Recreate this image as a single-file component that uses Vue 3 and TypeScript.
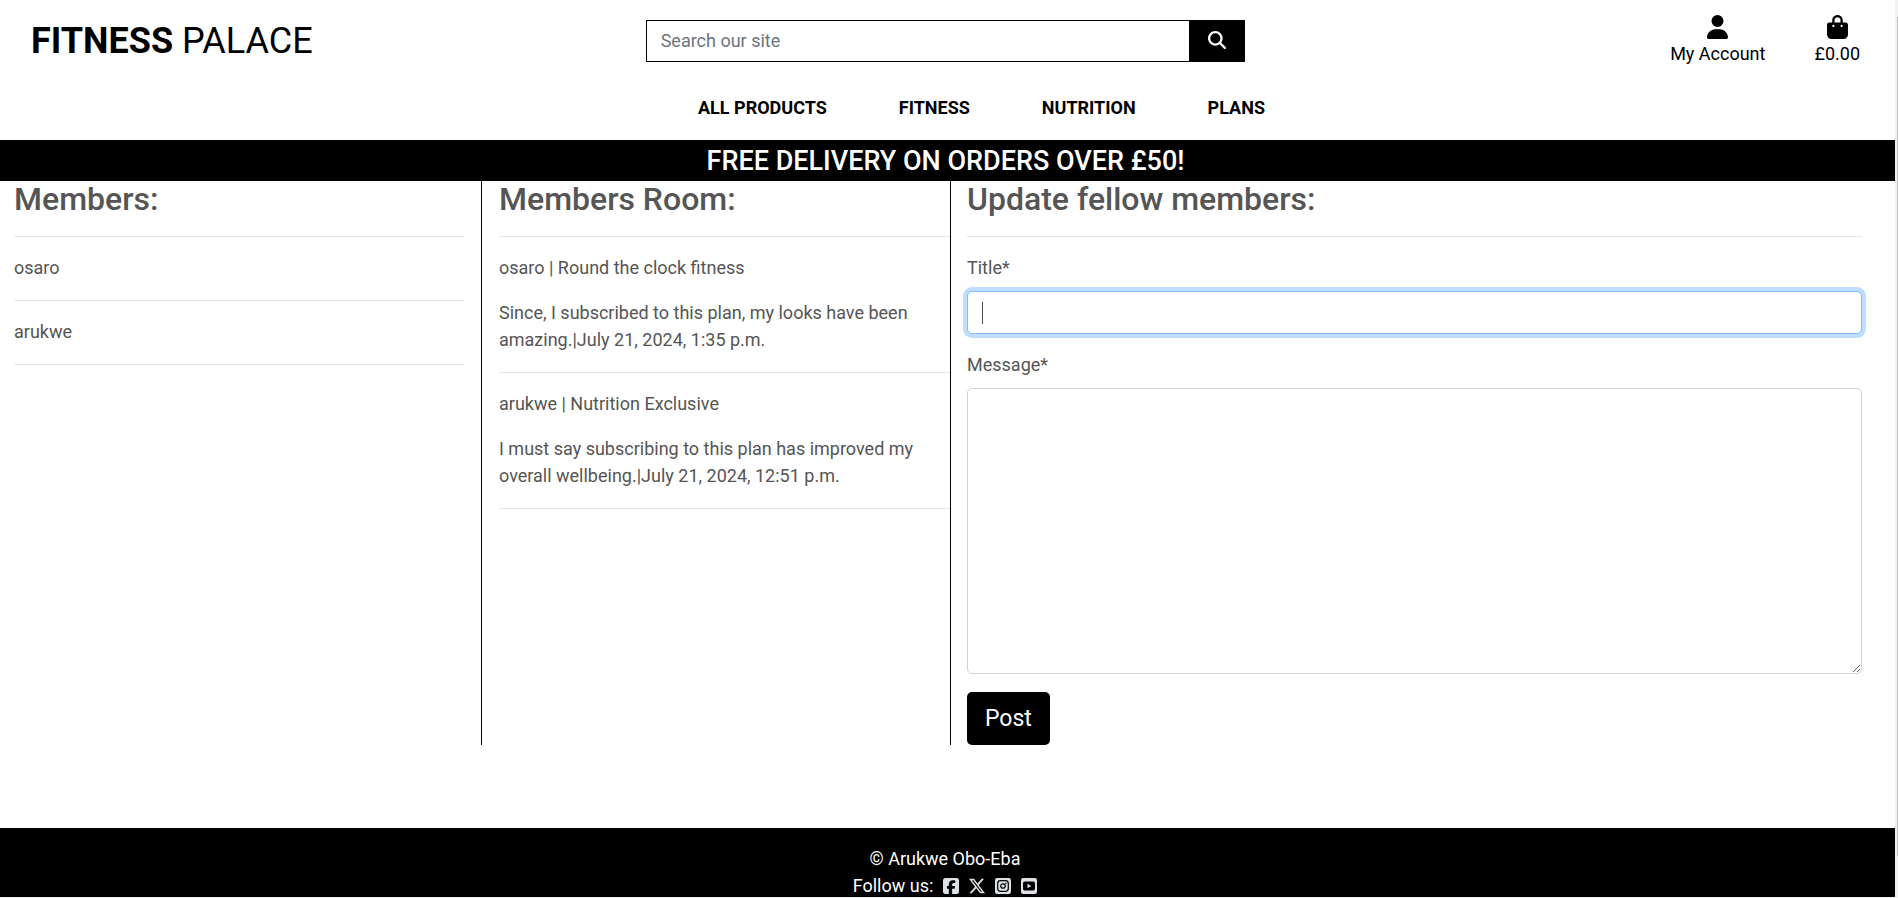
<script setup lang="ts">
import { ref } from 'vue'

interface Post {
  author: string
  title: string
  body: string
  date: string
}

const links: string[] = ['All Products', 'Fitness', 'Nutrition', 'Plans']
const members: string[] = ['osaro', 'arukwe']
const posts: Post[] = [
  {
    author: 'osaro',
    title: 'Round the clock fitness',
    body: 'Since, I subscribed to this plan, my looks have been amazing.',
    date: 'July 21, 2024, 1:35 p.m.',
  },
  {
    author: 'arukwe',
    title: 'Nutrition Exclusive',
    body: 'I must say subscribing to this plan has improved my overall wellbeing.',
    date: 'July 21, 2024, 12:51 p.m.',
  },
]

const query = ref('')
const title = ref('')
const message = ref('')
</script>

<template>
  <div class="shell">
    <div class="page">
      <header class="top">
        <div class="bar">
          <a class="logo" href="#"><strong>FITNESS</strong> PALACE</a>
          <form class="search" @submit.prevent>
            <input v-model="query" type="text" placeholder="Search our site" aria-label="Search our site" />
            <button type="submit" aria-label="Search">
              <svg class="icon-search" viewBox="0 0 512 512" aria-hidden="true">
                <path d="M416 208c0 45.9-14.9 88.3-40 122.7L502.6 457.4c12.5 12.5 12.5 32.8 0 45.3s-32.8 12.5-45.3 0L330.7 376c-34.4 25.2-76.8 40-122.7 40C93.1 416 0 322.9 0 208S93.1 0 208 0S416 93.1 416 208zM208 352a144 144 0 1 0 0-288 144 144 0 1 0 0 288z" />
              </svg>
            </button>
          </form>
          <div class="account">
            <a href="#">
              <svg viewBox="0 0 448 512" aria-hidden="true">
                <path d="M224 256A128 128 0 1 0 224 0a128 128 0 1 0 0 256zm-45.7 48C79.8 304 0 383.8 0 482.3C0 498.7 13.3 512 29.7 512H418.3c16.4 0 29.7-13.3 29.7-29.7C448 383.8 368.2 304 269.7 304H178.3z" />
              </svg>
              <span>My Account</span>
            </a>
            <a href="#">
              <svg viewBox="0 0 448 512" aria-hidden="true">
                <path d="M160 112c0-35.3 28.7-64 64-64s64 28.7 64 64v48H160V112zm-48 48H48c-26.5 0-48 21.5-48 48V416c0 53 43 96 96 96H352c53 0 96-43 96-96V208c0-26.5-21.5-48-48-48H336V112C336 50.1 285.9 0 224 0S112 50.1 112 112v48zm24 48a24 24 0 1 1 0 48 24 24 0 1 1 0-48zm152 24a24 24 0 1 1 48 0 24 24 0 1 1 -48 0z" />
              </svg>
              <span>£0.00</span>
            </a>
          </div>
        </div>
        <nav class="nav">
          <a v-for="link in links" :key="link" href="#">{{ link }}</a>
        </nav>
      </header>

      <h4 class="banner">FREE DELIVERY ON ORDERS OVER £50!</h4>

      <main class="columns">
        <section class="col members">
          <h3>Members:</h3>
          <hr />
          <template v-for="member in members" :key="member">
            <p>{{ member }}</p>
            <hr />
          </template>
        </section>

        <section class="col room">
          <h3>Members Room:</h3>
          <hr />
          <article v-for="post in posts" :key="post.title">
            <p>{{ post.author }} | {{ post.title }}</p>
            <p>{{ post.body }}|{{ post.date }}</p>
            <hr />
          </article>
        </section>

        <section class="col update">
          <h3>Update fellow members:</h3>
          <hr />
          <form @submit.prevent>
            <label for="title">Title*</label>
            <div class="field">
              <input id="title" v-model="title" type="text" />
              <span class="caret" aria-hidden="true"></span>
            </div>
            <label for="message">Message*</label>
            <textarea id="message" v-model="message"></textarea>
            <button class="post" type="submit">Post</button>
          </form>
        </section>
      </main>

      <footer class="foot">
        <div>© Arukwe Obo-Eba</div>
        <div class="follow">
          <span>Follow us:</span>
          <a href="#" aria-label="Facebook">
            <svg viewBox="0 32 448 448" aria-hidden="true">
              <path d="M64 32C28.7 32 0 60.7 0 96V416c0 35.3 28.7 64 64 64h98.2V334.2H109.4V256h52.8V222.3c0-87.1 39.4-127.5 125-127.5c16.2 0 44.2 3.2 55.7 6.4V172c-6-.6-16.5-1-29.6-1c-42 0-58.2 15.9-58.2 57.2V256h83.6l-14.4 78.2H255V480H384c35.3 0 64-28.7 64-64V96c0-35.3-28.7-64-64-64H64z" />
            </svg>
          </a>
          <a href="#" aria-label="X">
            <svg viewBox="26 26 461 461" aria-hidden="true">
              <path d="M389.2 48h70.6L305.6 224.2 487 464H345L233.7 318.6 106.5 464H35.8L200.7 275.5 26.8 48H172.4L272.9 180.9 389.2 48zM364.4 421.8h39.1L151.1 88h-42L364.4 421.8z" />
            </svg>
          </a>
          <a href="#" aria-label="Instagram">
            <svg viewBox="0 0 448 448" aria-hidden="true">
              <rect width="448" height="448" rx="64" />
              <rect class="cut" x="76" y="76" width="296" height="296" rx="80" />
              <circle class="cut" cx="224" cy="224" r="62" />
              <circle class="hole" cx="303" cy="145" r="20" />
            </svg>
          </a>
          <a href="#" aria-label="YouTube">
            <svg viewBox="0 0 448 448" aria-hidden="true">
              <rect width="448" height="448" rx="64" />
              <rect class="hole" x="56" y="98" width="336" height="252" rx="50" />
              <path d="M182 164l104 60-104 60z" />
            </svg>
          </a>
        </div>
      </footer>
    </div>
    <div class="track" aria-hidden="true"><div class="thumb"></div></div>
  </div>
</template>

<style>
body {
  margin: 0;
  background: #fff;
}
</style>

<style scoped>
* {
  box-sizing: border-box;
}

.shell {
  display: flex;
  height: 100vh;
  overflow: hidden;
  border-bottom: 1px solid #f1f1f1;
  font-family: Roboto, "Liberation Sans", sans-serif;
  font-size: 18px;
  line-height: 27px;
  color: #555;
}

.page {
  flex: 1;
  min-width: 0;
}

.track {
  width: 3px;
  padding: 17px 0 41px;
  display: flex;
  justify-content: flex-end;
  background: #f1f1f1;
}

.thumb {
  width: 1px;
  background: #c1c1c1;
}

a {
  color: inherit;
  text-decoration: none;
}

svg {
  display: block;
  fill: currentColor;
}

.top {
  height: 140px;
  color: #000;
}

.bar {
  display: grid;
  grid-template-columns: 1fr 1fr 1fr;
  align-items: start;
  padding-top: 15px;
}

.logo {
  padding: 5px 0 0 31px;
  font-size: 36px;
  line-height: 43px;
}

.logo strong {
  font-weight: 700;
}

.search {
  display: flex;
  margin: 5px 18px 0 14px;
}

.search input {
  flex: 1;
  min-width: 0;
  height: 42px;
  padding: 0 14px 2px;
  border: 1px solid #000;
  border-right: 0;
  border-radius: 0;
  outline: none;
  font: inherit;
  color: #495057;
}

.search input::placeholder {
  color: #6c757d;
  opacity: 1;
}

.search button {
  width: 56px;
  border: 0;
  background: #000;
  color: #fff;
  display: flex;
  align-items: center;
  justify-content: center;
  padding: 0 0 2px;
}

.icon-search {
  width: 18px;
  height: 18px;
}

.account {
  display: flex;
  justify-content: flex-end;
  gap: 49px;
  padding-right: 35px;
}

.account a {
  display: flex;
  flex-direction: column;
  align-items: center;
  gap: 1px;
}

.account svg {
  width: 21px;
  height: 24px;
}

.nav {
  display: flex;
  justify-content: center;
  gap: 72px;
  padding: 27px 0 0 68px;
}

.nav a {
  font-weight: 700;
  text-transform: uppercase;
}

.banner {
  margin: 0;
  padding: 5px 4px 3px 0;
  background: #000;
  color: #fff;
  font-size: 27px;
  font-weight: 500;
  line-height: 33px;
  text-align: center;
}

.columns {
  display: grid;
  grid-template-columns: 482fr 469fr 944fr;
}

.col {
  border-right: 1px solid #000;
}

.members {
  padding: 0 17px 0 14px;
}

.room {
  padding-left: 17px;
}

.update {
  padding: 0 33px 0 16px;
  border-right: 0;
}

h3 {
  margin: 0 0 19px;
  font-size: 32px;
  font-weight: 500;
  line-height: 36px;
}

hr {
  margin: 19px 0 17px;
  border: 0;
  border-top: 1px solid #e5e5e5;
}

p {
  margin: 0 0 18px;
}

label {
  display: block;
  margin-bottom: 10px;
}

.field {
  position: relative;
  margin-bottom: 17px;
}

.field input,
textarea {
  display: block;
  width: 100%;
  border: 1px solid #ced4da;
  border-radius: 5px;
  outline: none;
  padding: 7px 14px;
  background: #fff;
  font: inherit;
  color: #495057;
}

.field input {
  height: 43px;
  border-color: #80bdff;
  box-shadow: 0 0 0 4px rgba(0, 123, 255, 0.25);
  caret-color: transparent;
}

.caret {
  position: absolute;
  left: 15px;
  top: 11px;
  width: 1px;
  height: 22px;
  background: #495057;
}

textarea {
  height: 286px;
  resize: vertical;
}

.post {
  display: block;
  margin-top: 18px;
  height: 53px;
  padding: 0 18px;
  border: 0;
  border-radius: 5px;
  background: #000;
  color: #fff;
  font: inherit;
  font-size: 23px;
}

.foot {
  margin-top: 83px;
  padding: 17px 5px 18px 0;
  background: #000;
  color: #fff;
  text-align: center;
}

.follow {
  display: flex;
  justify-content: center;
  align-items: center;
  gap: 10px;
}

.follow a {
  color: #dee2e6;
}

.follow svg {
  width: 16px;
  height: 16px;
}

.cut {
  fill: none;
  stroke: #000;
  stroke-width: 34;
}

.hole {
  fill: #000;
}
</style>
